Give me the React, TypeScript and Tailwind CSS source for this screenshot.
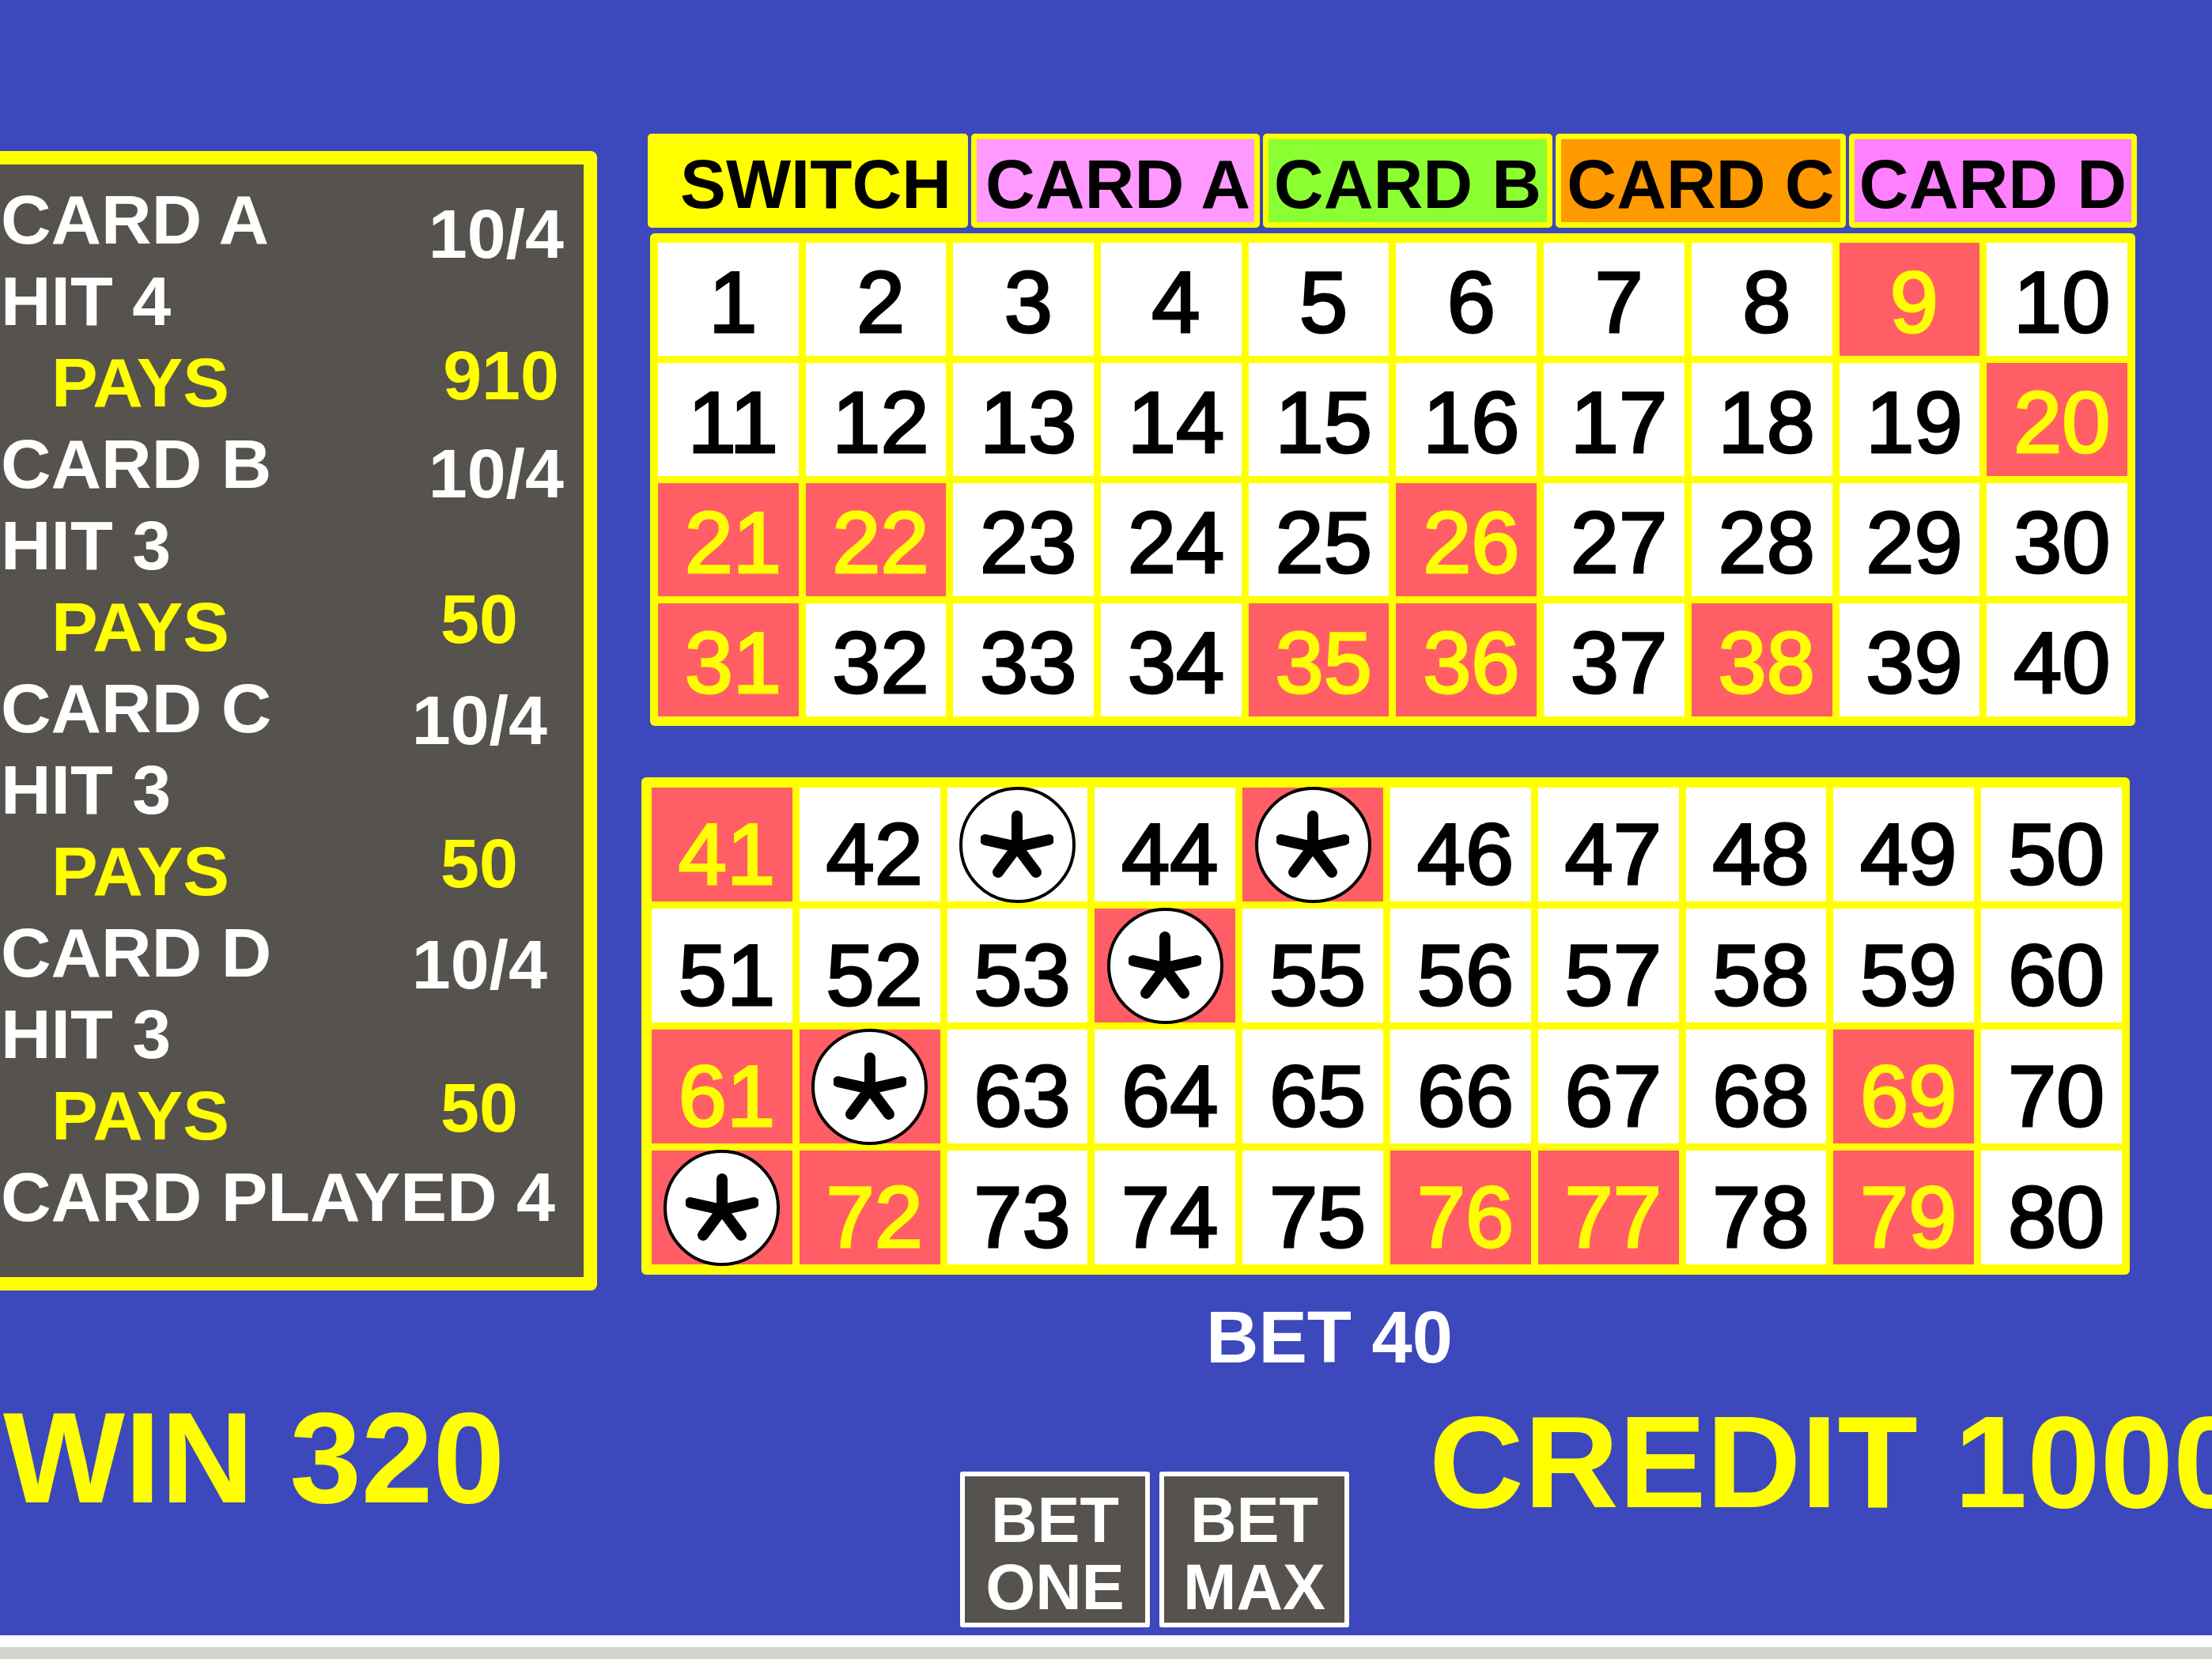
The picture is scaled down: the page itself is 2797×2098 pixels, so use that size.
const TOP_RED = new Set([9, 20, 21, 22, 26, 31, 35, 36, 38])
const BOTTOM_RED = new Set([41, 45, 54, 61, 62, 69, 71, 72, 76, 77, 79])
const STARS = new Set([43, 45, 54, 62, 71])

const TABS = [
  { label: 'SWITCH', cls: 'w-[405px] bg-[#ffff00] pl-[20px]' },
  { label: 'CARD A', cls: 'w-[365px] bg-[#ff99ff] pl-[6px]' },
  { label: 'CARD B', cls: 'w-[366px] bg-[#8cff33]' },
  { label: 'CARD C', cls: 'w-[367px] bg-[#ff9900]' },
  { label: 'CARD D', cls: 'w-[364px] bg-[#ff80ff]' },
]

// paytable lines: label, optional value and a nudge for the value
const LINES: { label: string; value?: string; pays?: boolean; v?: string }[] = [
  { label: 'CARD A', value: '10/4', v: 'mt-[18px]' },
  { label: 'HIT 4' },
  { label: 'PAYS', value: '910', pays: true, v: '-mt-[9px] mr-[6px]' },
  { label: 'CARD B', value: '10/4', v: 'mt-[12px]' },
  { label: 'HIT 3' },
  { label: 'PAYS', value: '50', pays: true, v: '-mt-[10px] mr-[58px]' },
  { label: 'CARD C', value: '10/4', v: 'mt-[15px] mr-[21px]' },
  { label: 'HIT 3' },
  { label: 'PAYS', value: '50', pays: true, v: '-mt-[10px] mr-[58px]' },
  { label: 'CARD D', value: '10/4', v: 'mt-[15px] mr-[21px]' },
  { label: 'HIT 3' },
  { label: 'PAYS', value: '50', pays: true, v: '-mt-[10px] mr-[58px]' },
  { label: 'CARD PLAYED 4' },
]

function Star() {
  return (
    <div className="w-[147px] h-[147px] shrink-0 rounded-full bg-white border-[4px] border-black flex items-center justify-center">
      <svg viewBox="-46 -46 92 92" className="w-[92px] h-[92px] mt-[6px]">
        <g stroke="black" strokeWidth={14} strokeLinecap="round">
          <line x1="0" y1="0" x2="0" y2="-39" />
          <line x1="0" y1="0" x2="40" y2="-9" />
          <line x1="0" y1="0" x2="-40" y2="-9" />
          <line x1="0" y1="0" x2="24" y2="32" />
          <line x1="0" y1="0" x2="-24" y2="32" />
        </g>
      </svg>
    </div>
  )
}

function Cell({ n, red, star, bottom }: { n: number; red: boolean; star: boolean; bottom: boolean }) {
  return (
    <div
      className={`flex items-center justify-center ${
        red ? 'bg-[#ff5e66] text-[#ffff00]' : 'bg-white text-black'
      }`}
    >
      {star ? (
        <Star />
      ) : (
        <span className={bottom ? 'pl-[12px] pt-[24px]' : 'pl-[12px] pt-[6px]'}>{n}</span>
      )}
    </div>
  )
}

export default function App() {
  const top = Array.from({ length: 40 }, (_, i) => i + 1)
  const bottom = Array.from({ length: 40 }, (_, i) => i + 41)

  return (
    <div className="w-[2797px] h-[2098px] overflow-hidden font-['Liberation_Sans',Arial,sans-serif]">
      <div className="h-[2068px] overflow-hidden bg-[#3c48bc] pt-[169px]">
        <div className="flex items-start">
          {/* paytable panel, left border runs off screen */}
          <div className="mt-[22px] -ml-[20px] w-[775px] h-[1441px] shrink-0 rounded-[8px] border-[17px] border-[#ffff00] bg-[#56524e] pt-[18px] pl-[4px] pr-[25px] text-[88px] font-bold leading-[103px] text-white">
            {LINES.map((l, i) => (
              <div key={i} className="flex items-start justify-between h-[103px] whitespace-nowrap">
                <span className={l.pays ? 'pl-[64px] text-[#ffff00]' : ''}>{l.label}</span>
                {l.value && <span className={`${l.v} ${l.pays ? 'text-[#ffff00]' : ''}`}>{l.value}</span>}
              </div>
            ))}
          </div>

          <div className="ml-[64px] w-[1884px] shrink-0">
            <div className="flex gap-[4px] h-[119px]">
              {TABS.map((t) => (
                <div
                  key={t.label}
                  className={`${t.cls} shrink-0 rounded-[5px] border-[7px] border-[#ffff00] flex items-center justify-center pt-[8px] text-[87px] font-bold leading-none text-black whitespace-nowrap`}
                >
                  {t.label}
                </div>
              ))}
            </div>

            <div className="mt-[7px] ml-[3px] w-[1878px] rounded-[6px] bg-[#ffff00] pt-[12px] px-[10px] pb-[12px]">
              <div className="grid grid-cols-10 auto-rows-[143px] gap-[9px] text-[110px] leading-none [-webkit-text-stroke:3px_currentColor]">
                {top.map((n) => (
                  <Cell key={n} n={n} red={TOP_RED.has(n)} star={false} bottom={false} />
                ))}
              </div>
            </div>

            <div className="mt-[65px] -ml-[8px] w-[1882px] rounded-[6px] bg-[#ffff00] pt-[13px] pl-[13px] pr-[10px] pb-[13px]">
              <div className="grid grid-cols-10 auto-rows-[144px] gap-[9px] text-[110px] leading-none [-webkit-text-stroke:3px_currentColor]">
                {bottom.map((n) => (
                  <Cell key={n} n={n} red={BOTTOM_RED.has(n)} star={STARS.has(n)} bottom />
                ))}
              </div>
            </div>

            <div className="mt-[33px] ml-[706px] text-[92px] font-bold leading-none text-white whitespace-nowrap">
              BET 40
            </div>
          </div>
        </div>

        <div className="flex items-start">
          <div className="w-[1214px] shrink-0 pl-[4px] pt-[25px] text-[163px] font-bold leading-none text-[#ffff00] whitespace-nowrap">
            WIN 320
          </div>
          <div className="w-[593px] shrink-0 pt-[124px] flex gap-[12px]">
            <div className="w-[240px] h-[197px] rounded-[3px] border-[6px] border-white bg-[#56524e] pt-[13px] text-center text-[81px] font-bold leading-[85px] text-white">
              BET
              <br />
              ONE
            </div>
            <div className="w-[240px] h-[197px] rounded-[3px] border-[6px] border-white bg-[#56524e] pt-[13px] text-center text-[81px] font-bold leading-[85px] text-white">
              BET
              <br />
              MAX
            </div>
          </div>
          <div className="shrink-0 pt-[29px] text-[166px] font-bold leading-none text-[#ffff00] whitespace-nowrap">
            CREDIT 1000
          </div>
        </div>
      </div>
      <div className="h-[15px] bg-white" />
      <div className="h-[15px] bg-[#d3d3cf]" />
    </div>
  )
}
